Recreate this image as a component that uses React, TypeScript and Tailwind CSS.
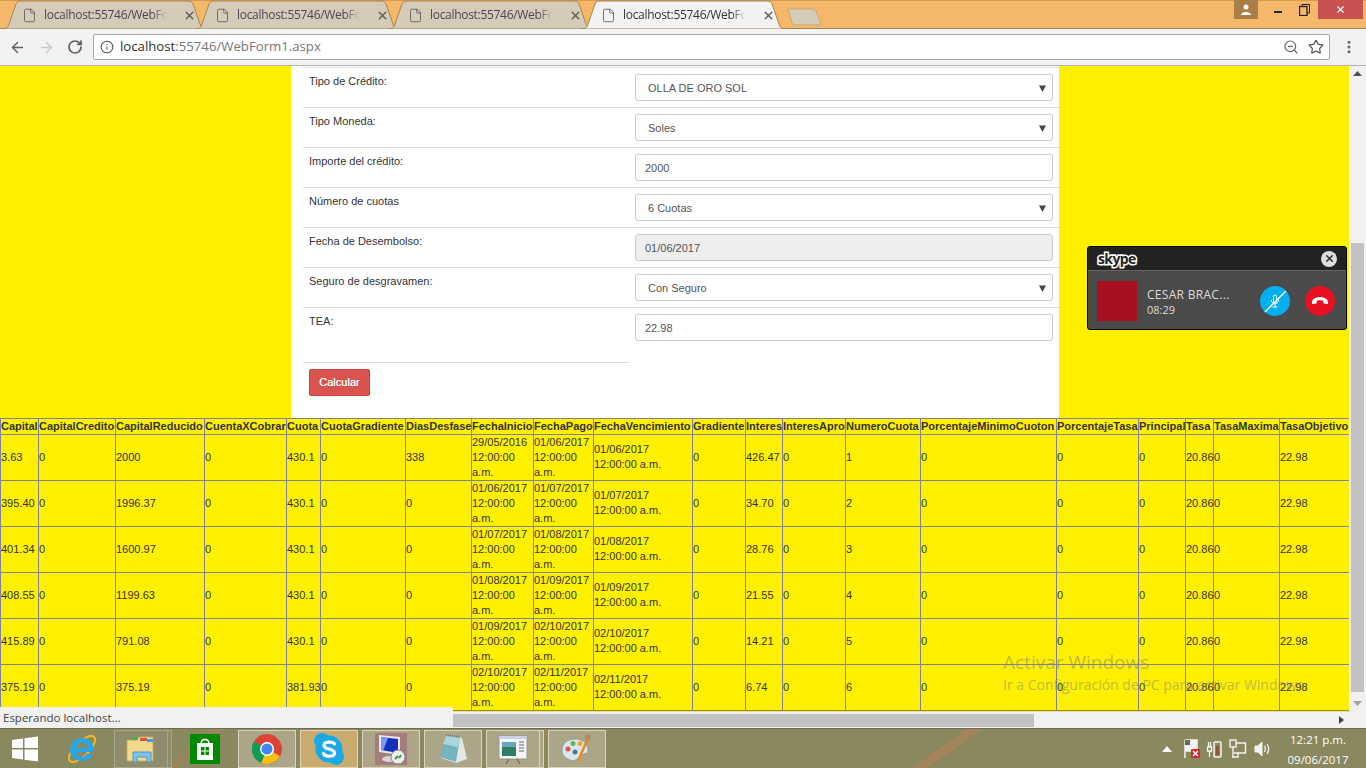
import { ArrowLeft, ArrowRight, File, Info, MoreVertical, RotateCw, Star, X, ZoomOut } from "lucide-react"

const columns = [
  ["Capital", 38],
  ["CapitalCredito", 77],
  ["CapitalReducido", 89],
  ["CuentaXCobrar", 82],
  ["Cuota", 34],
  ["CuotaGradiente", 85],
  ["DiasDesfase", 66],
  ["FechaInicio", 62],
  ["FechaPago", 60],
  ["FechaVencimiento", 99],
  ["Gradiente", 53],
  ["Interes", 37],
  ["InteresApro", 63],
  ["NumeroCuota", 75],
  ["PorcentajeMinimoCuoton", 136],
  ["PorcentajeTasa", 82],
  ["Principal", 47],
  ["Tasa", 28],
  ["TasaMaxima", 66],
  ["TasaObjetivo", 70],
] as const

const rows = [
  ["3.63", "2000", "430.1", "338", "29/05/2016", "01/06/2017", "01/06/2017", "426.47", "1"],
  ["395.40", "1996.37", "430.1", "0", "01/06/2017", "01/07/2017", "01/07/2017", "34.70", "2"],
  ["401.34", "1600.97", "430.1", "0", "01/07/2017", "01/08/2017", "01/08/2017", "28.76", "3"],
  ["408.55", "1199.63", "430.1", "0", "01/08/2017", "01/09/2017", "01/09/2017", "21.55", "4"],
  ["415.89", "791.08", "430.1", "0", "01/09/2017", "02/10/2017", "02/10/2017", "14.21", "5"],
  ["375.19", "375.19", "381.93", "0", "02/10/2017", "02/11/2017", "02/11/2017", "6.74", "6"],
]

const fields = [
  { label: "Tipo de Crédito:", value: "OLLA DE ORO SOL", select: true },
  { label: "Tipo Moneda:", value: "Soles", select: true },
  { label: "Importe del crédito:", value: "2000" },
  { label: "Número de cuotas", value: "6 Cuotas", select: true },
  { label: "Fecha de Desembolso:", value: "01/06/2017", disabled: true },
  { label: "Seguro de desgravamen:", value: "Con Seguro", select: true },
  { label: "TEA:", value: "22.98" },
]

function Tab({ active, first }: { active?: boolean; first?: boolean }) {
  return (
    <div className={`relative h-[29px] w-[205px] shrink-0 ${first ? "" : "-ml-[12px]"} ${active ? "z-10" : ""}`}>
      <svg className="absolute inset-0" width="205" height="29" viewBox="0 0 205 29">
        <path
          d="M0 29 C5 29 6 27 7 24 L14 4 C15 2 16 1 19 1 L186 1 C189 1 190 2 191 4 L198 24 C199 27 200 29 205 29 Z"
          fill={active ? "#f2f2f2" : "#d6cbb9"}
          stroke="#a8854f"
        />
      </svg>
      <div className="absolute inset-0 flex items-center pl-[20px] pt-[1px]">
        <File size={15} strokeWidth={1.3} className="text-[#555]" />
        <span className={`ml-[7px] w-[123px] overflow-hidden whitespace-nowrap text-[12px] tracking-[-0.3px] [mask-image:linear-gradient(to_right,black_88%,transparent)] ${active ? "text-[#333]" : "text-[#55405a]"}`}>
          localhost:55746/WebForm1.aspx
        </span>
        <X size={13} strokeWidth={2.6} className="ml-[16px] text-[#5a5a5a]" />
      </div>
    </div>
  )
}

function TaskButton({ children, width = 58, active, warm, stack }: { children: React.ReactNode; width?: number; active?: boolean; warm?: boolean; stack?: boolean }) {
  const bg = warm ? "bg-[#c9ab70] border-[#e2d6b4]" : active ? "bg-[#aca587] border-[#d8d4c0]" : "bg-[#8e8c6c] border-[#a8a68a]"
  return (
    <div className="flex h-[38px] shrink-0">
      <div className={`flex h-full items-center justify-center border ${bg}`} style={{ width }}>
        {children}
      </div>
      {stack && <div className={`h-full w-[4px] border-y border-r ${bg}`} />}
    </div>
  )
}

function Taskbar() {
  return (
    <div className="relative flex h-[40px] shrink-0 items-center overflow-hidden border-t border-[#6d6d50] bg-[#89885f] text-white">
      <div className="absolute left-[189px] top-[-20px] h-[80px] w-[9px] rotate-[50deg] bg-[#a4845a]/60" />
      <div className="absolute left-[521px] top-[-20px] h-[80px] w-[9px] rotate-[50deg] bg-[#a4845a]/50" />
      <div className="absolute left-[942px] top-[-20px] h-[80px] w-[9px] rotate-[55deg] bg-[#a4845a]" />
      <div className="relative flex items-center">
        <div className="flex w-[50px] justify-center">
          <svg width="28" height="26" viewBox="0 0 28 26"><path d="M1 4 L12 2.5 V12 H1 Z M13.500 2.300 L27 0.500 V12 H13.500 Z M1 13.500 H12 V23.500 L1 22 Z M13.500 13.500 H27 V25.500 L13.500 23.700 Z" fill="#fff" /></svg>
        </div>
        <div className="flex w-[64px] justify-center">
          <svg width="32" height="34" viewBox="0 0 32 34">
            <ellipse cx="16" cy="17" rx="17" ry="7" transform="rotate(-45 16 17)" fill="none" stroke="#f0b429" strokeWidth="2.200" />
            <path d="M16 6 C8 6 4 12 4 18 C4 25 9 29 16 29 C22 29 25 26 27 22 H20 C19 24 18 25 16 25 C13 25 11 23 11 20 H28 C28 12 24 6 16 6 Z M11 16 C11 13 13 10.500 16 10.500 C19 10.500 21 13 21 16 Z" fill="#2aa6e0" />
          </svg>
        </div>
        <TaskButton width={54} stack>
          <svg width="32" height="30" viewBox="0 0 32 30">
            <path d="M2 6 H12 L14 3 H28 V27 H2 Z" fill="#f3d98b" stroke="#c8a85a" />
            <rect x="6" y="3" width="7" height="3" fill="#4caf50" />
            <rect x="15" y="4" width="7" height="3" fill="#d9534f" />
            <rect x="22" y="5" width="6" height="3" fill="#3f9ae0" />
            <path d="M8 28 V18 H26 V28 H22 V23 H12 V28 Z" fill="#7cc4ee" stroke="#4a97c8" />
          </svg>
        </TaskButton>
        <div className="flex w-[66px] justify-center">
          <div className="flex h-[30px] w-[30px] items-center justify-center bg-[#008a00]">
            <svg width="20" height="24" viewBox="0 0 20 24">
              <path d="M6 7 C6 1 14 1 14 7" fill="none" stroke="#fff" strokeWidth="1.500" />
              <path d="M2 6 H18 V23 H2 Z" fill="#fff" />
              <path d="M6 10 H9.500 V13.500 H6 Z M10.500 10 H14 V13.500 H10.500 Z M6 14.500 H9.500 V18 H6 Z M10.500 14.500 H14 V18 H10.500 Z" fill="#008a00" />
            </svg>
          </div>
        </div>
        <div className="flex gap-[4px]">
          <TaskButton active>
            <svg width="30" height="30" viewBox="0 0 30 30">
              <circle cx="15" cy="15" r="15" fill="#db4437" />
              <path d="M15 15 L28 22 A15 15 0 0 1 9 28.700 Z" fill="#f4c20d" />
              <path d="M15 15 L9 29 A15 15 0 0 1 2 7.500 Z" fill="#0f9d58" />
              <circle cx="15" cy="15" r="7" fill="#fff" />
              <circle cx="15" cy="15" r="5.500" fill="#4285f4" />
            </svg>
          </TaskButton>
          <TaskButton active warm>
            <svg width="30" height="32" viewBox="0 0 30 32">
              <circle cx="8" cy="8" r="8" fill="#19a9e5" />
              <circle cx="22" cy="24" r="8" fill="#19a9e5" />
              <circle cx="15" cy="16" r="13.500" fill="#19a9e5" />
              <path d="M20.500 11 C19 8.500 10 8 10 12.500 C10 17 20.500 15 20.500 20 C20.500 24.500 11 24 9.500 20.500" fill="none" stroke="#fff" strokeWidth="3.200" strokeLinecap="round" />
            </svg>
          </TaskButton>
          <TaskButton active>
            <div className="relative h-[32px] w-[32px] bg-[#a37d7a]">
              <svg width="32" height="32" viewBox="0 0 32 32">
                <path d="M4 2 L25 4 V22 L4 19 Z" fill="#e8e8e8" />
                <path d="M6 4 L23 6 V20 L6 17 Z" fill="#1430b8" />
                <path d="M6 4 L13 5 L8 18 L6 17 Z" fill="#7e9af0" />
                <ellipse cx="14" cy="26" rx="7" ry="3" fill="#d5d5d5" />
                <circle cx="23" cy="24" r="7" fill="#eee" stroke="#888" />
                <path d="M20 26 L23 23 M24 25 L26 22" stroke="#2e9e3c" strokeWidth="2" />
              </svg>
            </div>
          </TaskButton>
          <TaskButton active>
            <svg width="30" height="32" viewBox="0 0 30 32">
              <path d="M10 3 L24 5 L29 26 L18 30 L3 25 Z" fill="#e4e8e4" />
              <path d="M8 3 L22 5 L18 29 L2 24 Z" fill="#74b4bd" />
              <path d="M8 3 L22 5 L20 14 L5 11 Z" fill="#a9d6da" />
              <path d="M8 2 L22 4" stroke="#777" strokeWidth="2" strokeDasharray="1 1" />
            </svg>
          </TaskButton>
          <TaskButton active width={54} stack>
            <svg width="30" height="32" viewBox="0 0 30 32">
              <rect x="1" y="3" width="28" height="23" fill="#f5f5f5" stroke="#999" />
              <rect x="1" y="3" width="28" height="3" fill="#c9d6ea" />
              <rect x="4" y="9" width="14" height="14" fill="#2d7f63" />
              <path d="M4 9 H18 V14 H4 Z" fill="#6aa5c0" />
              <path d="M21 9 H26 M21 12 H26 M21 15 H26 M21 18 H26" stroke="#667" strokeWidth="1" />
              <path d="M11 26 L8 31 M19 26 L22 31" stroke="#8a7a5a" strokeWidth="1.500" />
            </svg>
          </TaskButton>
          <TaskButton active>
            <svg width="32" height="32" viewBox="0 0 32 32">
              <path d="M1 17 C1 9 8 6 15 6 C22 6 27 11 27 17 C27 22 22 20 19 23 C17 26 14 29 9 27 C4 25 1 22 1 17 Z" fill="#dce6e8" stroke="#8ca0a4" />
              <circle cx="7" cy="16" r="2.500" fill="#d9534f" />
              <circle cx="12" cy="10.500" r="2.500" fill="#5cb85c" />
              <circle cx="19" cy="10.500" r="2.500" fill="#e8a33d" />
              <circle cx="14" cy="19" r="2.500" fill="#4b7a9e" />
              <path d="M28 3 L17 28" stroke="#e88a1f" strokeWidth="2.500" />
              <path d="M25 1 L30 3 L28 8 L24 6 Z" fill="#b08b5a" />
            </svg>
          </TaskButton>
        </div>
      </div>
      <div className="relative ml-auto flex items-center">
        <svg width="10" height="6" viewBox="0 0 10 6"><path d="M5 0 L10 6 H0 Z" fill="#fff" /></svg>
        <svg className="ml-[11px]" width="18" height="20" viewBox="0 0 18 20">
          <path d="M2 1 V19 M2 1 H14 V12 H2" fill="#f4f4f4" stroke="#f4f4f4" strokeWidth="1.500" />
          <rect x="2" y="1" width="5" height="5" fill="#6a6a50" />
          <rect x="8" y="10" width="9" height="9" rx="1" fill="#d8262c" />
          <path d="M10 12 L15 17 M15 12 L10 17" stroke="#fff" strokeWidth="1.500" />
        </svg>
        <svg className="ml-[5px]" width="16" height="20" viewBox="0 0 16 20" fill="none" stroke="#f4f4f4">
          <path d="M1.500 8 H5.500 V12 H1.500 Z M2.500 8 V3 M4.500 8 V3 M3.500 12 V18" strokeWidth="1.300" />
          <rect x="8" y="3" width="7" height="15" rx="1" strokeWidth="1.500" />
          <rect x="10" y="7" width="3" height="9" fill="#8a5a3a" stroke="none" />
        </svg>
        <svg className="ml-[7px]" width="18" height="20" viewBox="0 0 18 20" fill="none" stroke="#f4f4f4" strokeWidth="1.400">
          <rect x="1" y="1" width="6" height="7" />
          <path d="M7 4 H16.500 V14 H5 M9 14 V18 H3 M4 8 V18" />
        </svg>
        <svg className="ml-[7px]" width="16" height="18" viewBox="0 0 16 18" fill="none" stroke="#f4f4f4">
          <path d="M1 6 H4 L8 2 V16 L4 12 H1 Z" fill="#f4f4f4" />
          <path d="M10.500 6 C11.500 8 11.500 10 10.500 12 M13 4 C15 7 15 11 13 14" strokeWidth="1.300" />
        </svg>
        <div className="ml-[19px] mr-[19px] flex w-[58px] flex-col items-center pt-[3px] font-['Open_Sans',sans-serif] text-[11.5px] leading-[20px] text-white">
          <span className="whitespace-nowrap">12:21 p.m.</span>
          <span className="whitespace-nowrap">09/06/2017</span>
        </div>
      </div>
    </div>
  )
}

export default function App() {
  return (
    <div className="relative flex h-[768px] w-[1366px] flex-col overflow-hidden bg-[#f2f2f2] font-['Liberation_Sans',Arial,sans-serif]">
      <div className="relative flex h-[29px] shrink-0 bg-[#f5b76a] pl-[2px] font-['Open_Sans',sans-serif]">
        <div className="absolute inset-x-0 bottom-0 h-px bg-[#a8854f]" />
        <div className="absolute inset-x-0 top-0 h-px bg-[#d89a4f]" />
        <Tab first />
        <Tab />
        <Tab />
        <Tab active />
        <svg className="relative ml-[1px] mt-[8px]" width="36" height="18" viewBox="0 0 36 18">
          <path d="M1 1 H26 Q28 1 29 3 L34 16 Q34 17 33 17 H8 Q6 17 5 15 Z" fill="#d6cbb9" stroke="#c9a772" />
        </svg>
        <div className="absolute right-[3px] top-0 flex h-[19px] items-start">
          <div className="mr-[6px] flex h-[19px] w-[24px] items-center justify-center bg-[#a87f47]">
            <svg width="12" height="12" viewBox="0 0 12 12"><circle cx="6" cy="3" r="2.500" fill="#fff" /><path d="M1 11 C1 7 11 7 11 11 Z" fill="#fff" /></svg>
          </div>
          <div className="flex h-[19px] w-[27px] items-center justify-center pt-[4px]"><div className="h-[2px] w-[8px] bg-[#222]" /></div>
          <div className="flex h-[19px] w-[27px] items-center justify-center">
            <svg width="11" height="12" viewBox="0 0 11 12" fill="none" stroke="#222"><rect x="0.500" y="2.500" width="7.500" height="9" strokeWidth="1.300" /><path d="M3 2 V0.500 H10.500 V9 H8" /></svg>
          </div>
          <div className="flex h-[19px] w-[45px] items-center justify-center bg-[#c75050]">
            <X size={11} strokeWidth={2.5} className="text-white" />
          </div>
        </div>
      </div>
      <div className="flex h-[37px] shrink-0 items-center border-b border-[#b5b5b5] bg-[#f2f2f2]">
        <ArrowLeft size={17} strokeWidth={2} className="ml-[9px] text-[#5f5f5f]" />
        <ArrowRight size={17} strokeWidth={2} className="ml-[12px] text-[#c8c8c8]" />
        <RotateCw size={16} strokeWidth={2.6} className="ml-[12px] text-[#5f5f5f]" />
        <div className="ml-[10px] flex h-[26px] w-[1237px] items-center rounded-[2px] border border-[#aaa] bg-white font-['Open_Sans',sans-serif] text-[13.2px]">
          <Info size={14} strokeWidth={1.800} className="ml-[6px] text-[#555]" />
          <span className="ml-[6px] text-[#333]">localhost</span>
          <span className="text-[#777]">:55746/WebForm1.aspx</span>
          <ZoomOut size={16} strokeWidth={1.800} className="ml-auto text-[#666]" />
          <Star size={16} strokeWidth={1.800} className="ml-[9px] mr-[5px] text-[#555]" />
        </div>
        <MoreVertical size={16} strokeWidth={2.6} className="ml-[11px] text-[#666]" />
      </div>

      <div className="flex min-h-0 flex-1">
        <div className="flex min-w-0 flex-1 flex-col">
          <div className="min-h-0 flex-1 overflow-hidden bg-[#fff000]">
            <div className="ml-[291px] h-[352px] w-[768px] bg-white pl-[12px] pt-px text-[#333]">
              {fields.map((f) => (
                <div key={f.label} className="flex h-[40px] border-t border-[#ddd]">
                  <label className="w-[326px] pl-[6px] pt-[6px] text-[11px] leading-[15px]">{f.label}</label>
                  <div className="pl-[6px] pt-[6px]">
                    <div className={`flex h-[27px] w-[418px] items-center rounded-[3px] border border-[#ccc] pt-px text-[11px] text-[#555] ${f.disabled ? "bg-[#eee]" : "bg-white"} ${f.select ? "pl-[12px]" : "pl-[9px]"}`}>
                      {f.value}
                      {f.select && (
                        <svg className="ml-auto mr-[6px]" width="7" height="7" viewBox="0 0 7 7"><path d="M0 0.500 H7 L3.500 7 Z" fill="#444" /></svg>
                      )}
                    </div>
                  </div>
                </div>
              ))}
              <div className="mt-[15px] w-[326px] border-t border-[#ddd] pl-[6px] pt-[6px]">
                <button className="h-[27px] w-[61px] rounded-[2px] border border-[#d43f3a] bg-[#d9534f] text-[11px] text-white [text-shadow:0_0_0.6px_#fff]">Calcular</button>
              </div>
            </div>
            <table className="w-[1350px] table-fixed border-collapse border-t border-[#8080a0] text-[11px] text-[#333]">
              <colgroup>
                {columns.map(([name, w]) => (
                  <col key={name} style={{ width: w }} />
                ))}
              </colgroup>
              <thead>
                <tr className="h-[16px]">
                  {columns.map(([name]) => (
                    <th key={name} className="overflow-visible whitespace-nowrap border border-[#8080a0] p-0 text-left leading-[15px]">{name}</th>
                  ))}
                </tr>
              </thead>
              <tbody>
                {rows.map((r) => {
                  const cells = [r[0], "0", r[1], "0", r[2], "0", r[3], `${r[4]} 12:00:00 a.m.`, `${r[5]} 12:00:00 a.m.`, `${r[6]} 12:00:00 a.m.`, "0", r[7], "0", r[8], "0", "0", "0", "20.86", "0", "22.98"]
                  return (
                    <tr key={r[8]} className="h-[46px]">
                      {cells.map((c, i) => (
                        <td key={i} className={`overflow-visible border border-[#8080a0] p-0 leading-[15px] ${i === 9 ? "pb-[2px]" : ""}`}>{c}</td>
                      ))}
                    </tr>
                  )
                })}
              </tbody>
            </table>
          </div>
          <div className="flex h-[16px] shrink-0 items-center bg-[#f1f1f1]">
            <div className="ml-[450px] h-[13px] w-[584px] bg-[#c1c1c1]" />
            <svg className="ml-auto mr-[5px]" width="5" height="8" viewBox="0 0 5 8"><path d="M0 0 L5 4 L0 8 Z" fill="#444" /></svg>
          </div>
        </div>
        <div className="flex w-[17px] shrink-0 flex-col items-center bg-[#f1f1f1] pt-[5px]">
          <svg width="9" height="5" viewBox="0 0 9 5"><path d="M4.500 0 L9 5 H0 Z" fill="#505050" /></svg>
          <div className="mt-[167px] h-[449px] w-[13px] bg-[#c1c1c1]" />
          <svg className="mt-[9px]" width="9" height="5" viewBox="0 0 9 5"><path d="M0 0 H9 L4.500 5 Z" fill="#a3a3a3" /></svg>
        </div>
      </div>

      <Taskbar />

      {/* cosas que flotan encima de la pagina */}
      <div className="absolute left-0 top-[707px] flex h-[21px] w-[453px] items-center rounded-tr-[3px] bg-[#f1f1f1] pl-[3px] font-['Open_Sans',sans-serif] text-[11.5px] text-[#444]">
        Esperando localhost...
      </div>

      <div className="absolute left-[1087px] top-[246px] h-[84px] w-[260px] overflow-hidden rounded-[3px] border border-black bg-[#4a4a4a] font-['Open_Sans',sans-serif] text-[#ddd]">
        <div className="flex h-[24px] items-center justify-between border-b border-[#666] bg-[#222] pl-[10px] pr-[9px]">
          <span className="text-[14px] font-bold leading-none tracking-[-0.6px] text-[#222] [-webkit-text-stroke:3px_#fff] [paint-order:stroke_fill]">skype</span>
          <div className="flex h-[16px] w-[16px] items-center justify-center rounded-full bg-[#ddd]">
            <X size={11} strokeWidth={3.500} className="text-[#333]" />
          </div>
        </div>
        <div className="flex items-center pl-[9px] pt-[10px]">
          <div className="h-[40px] w-[40px] bg-[#a9101f]" />
          <div className="ml-[10px] w-[100px]">
            <div className="text-[12px] leading-[16px] tracking-[0.3px]">CESAR BRAC...</div>
            <div className="text-[11px] leading-[13px]">08:29</div>
          </div>
          <div className="ml-[13px] flex h-[30px] w-[30px] items-center justify-center rounded-full bg-[#00aff0]">
            <svg width="26" height="26" viewBox="0 0 26 26" fill="none" stroke="#fff" strokeWidth="1">
              <rect x="11.500" y="7" width="3" height="8" rx="1.500" />
              <path d="M9.500 12 C9.500 17 16.500 17 16.500 12 M13 16 V19 M10.500 19 H15.500" />
              <path d="M3 24 L24 3" strokeWidth="1.300" />
            </svg>
          </div>
          <div className="ml-[15px] flex h-[30px] w-[30px] items-center justify-center rounded-full bg-[#e81123]">
            <svg width="18" height="8" viewBox="0 0 18 8"><path d="M1 7 C0 2 5 0 9 0 C13 0 18 2 17 7 L12.500 6.500 L12 3.500 C10 3 8 3 6 3.500 L5.500 6.500 Z" fill="#fff" /></svg>
          </div>
        </div>
      </div>

      <div className="pointer-events-none absolute left-[1003px] top-[650px] font-['Open_Sans',sans-serif] text-[#808080]/50">
        <div className="text-[19px] leading-[24px]">Activar Windows</div>
        <div className="whitespace-nowrap text-[14px] leading-[22px]">Ir a Configuración de PC para activar Windows.</div>
      </div>
    </div>
  )
}
